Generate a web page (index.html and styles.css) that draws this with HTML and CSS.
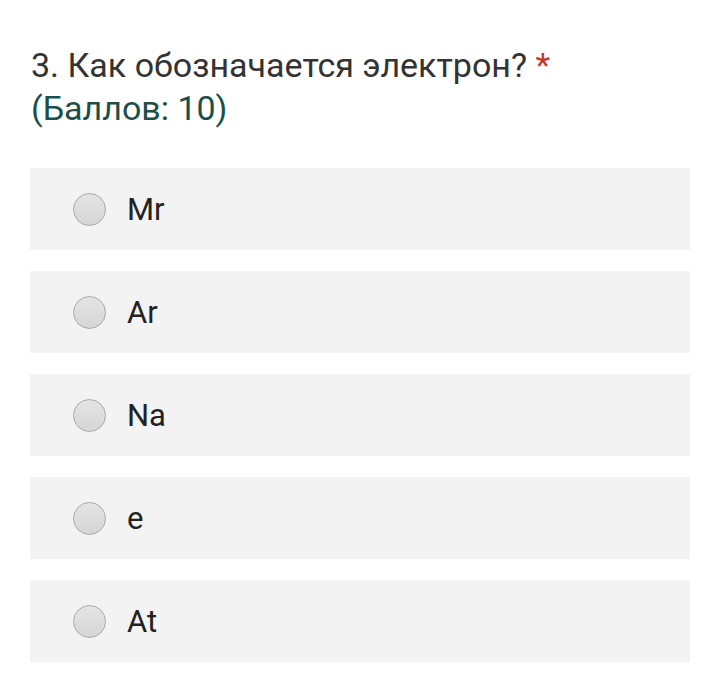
FILE: index.html
```html
<!DOCTYPE html>
<html lang="ru">
<head>
<meta charset="utf-8">
<link rel="stylesheet" href="styles.css">
</head>
<body>
<div class="question">
  <div class="title">3. Как обозначается электрон? <span class="req">*</span></div>
  <div class="points">(Баллов: 10)</div>
</div>
<div class="options">
  <label class="option"><span class="radio"></span><span class="label">Mr</span></label>
  <label class="option"><span class="radio"></span><span class="label">Ar</span></label>
  <label class="option"><span class="radio"></span><span class="label">Na</span></label>
  <label class="option"><span class="radio"></span><span class="label">e</span></label>
  <label class="option"><span class="radio"></span><span class="label">At</span></label>
</div>
</body>
</html>
```
FILE: styles.css
```css
html, body {
  margin: 0;
  padding: 0;
  background: #ffffff;
}
body {
  font-family: Roboto, "Noto Sans", sans-serif;
  width: 720px;
  height: 682px;
  overflow: hidden;
}
.question {
  padding: 44px 30px 0 31px;
  font-size: 34px;
  line-height: 43px;
  height: 124px;
  box-sizing: border-box;
}
.title {
  color: #333333;
}
.req {
  color: #c0392b;
}
.points {
  color: #1b4f4a;
}
.options {
  display: flex;
  flex-direction: column;
  gap: 21px;
  margin: 44px 30px 0 30px;
}
.option {
  display: flex;
  align-items: center;
  height: 82px;
  background: #f3f3f3;
  padding-left: 43px;
}
.radio {
  width: 31px;
  height: 31px;
  border-radius: 50%;
  border: 1px solid #a8a8a8;
  background: linear-gradient(#e4e4e4, #d6d6d6);
  flex: none;
}
.label {
  margin-left: 21px;
  font-size: 31px;
  color: #222222;
}
```
